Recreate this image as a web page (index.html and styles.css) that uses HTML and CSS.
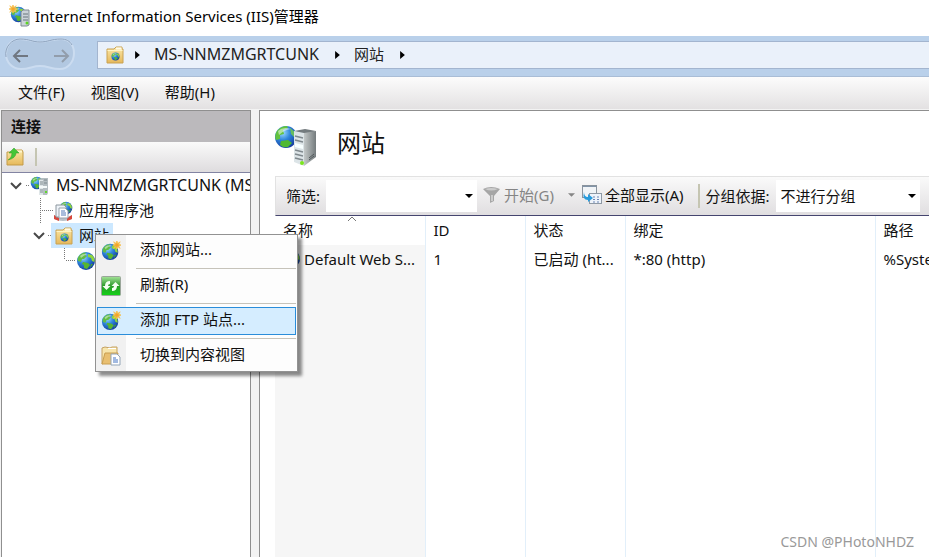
FILE: index.html
```html
<!DOCTYPE html>
<html lang="zh-CN">
<head>
  <meta charset="UTF-8">
  <meta name="viewport" content="width=device-width, initial-scale=1.0">
  <title>Internet Information Services (IIS)管理器</title>
  <link rel="stylesheet" href="styles.css">
</head>

<body>
  <!-- shared icons -->
  <svg class="sprite" aria-hidden="true">
    <defs>
      <radialGradient id="sea" cx="35%" cy="30%" r="75%">
        <stop offset="0" stop-color="#9fdcff"/>
        <stop offset="0.45" stop-color="#2f86dc"/>
        <stop offset="1" stop-color="#123a9c"/>
      </radialGradient>
      <linearGradient id="side" x1="0" x2="1">
        <stop offset="0" stop-color="#c3c8c8"/>
        <stop offset="1" stop-color="#747b7d"/>
      </linearGradient>
      <linearGradient id="gold" x1="0" y1="0" x2="0" y2="1">
        <stop offset="0" stop-color="#fbe9a9"/>
        <stop offset="1" stop-color="#e6b85a"/>
      </linearGradient>
      <linearGradient id="green" x1="0" y1="0" x2="0" y2="1">
        <stop offset="0" stop-color="#a5e399"/>
        <stop offset="0.5" stop-color="#2b9a2a"/>
        <stop offset="1" stop-color="#12d416"/>
      </linearGradient>
    </defs>
    <symbol id="globe" viewBox="0 0 20 20">
      <circle cx="10" cy="10" r="9" fill="url(#sea)"/>
      <path d="M3 5Q6 1 10 1.500L9 4L11 5L8 8L6 8L5 11L2 10Q1 7 3 5Z" fill="#62bd45"/>
      <path d="M12 3L16 4Q19 7 18.500 11L16 10L15 7L12 6Z" fill="#8fd63c"/>
      <path d="M7 11L12 12L14 14L11 18L8 17L8 14L6 13Z" fill="#57b530"/>
      <path d="M15 13L17 13L14 17Z" fill="#4aa82e"/>
      <path d="M4 5Q7 2 12 3Q8 4 5 7Z" fill="#ffffff" opacity="0.45"/>
    </symbol>
    <symbol id="server" viewBox="0 0 42 42">
      <circle cx="11" cy="12" r="11" fill="url(#sea)"/>
      <path d="M2 6Q6 1 12 1L13 3L8 5L9 9L5 10L5 14L1 15Q-1 10 2 6Z" fill="#62c33e"/>
      <path d="M6 16L13 15L17 18L13 22Q8 23 5 20Z" fill="#4fb832"/>
      <path d="M15 3L20 7L19 12L16 9Z" fill="#66bd60"/>
      <path d="M3 6Q8 1 16 4Q9 5 4 10Z" fill="#ffffff" opacity="0.5"/>
      <path d="M19 6L30 4L41 6L30 10Z" fill="#737b7e"/>
      <path d="M19 6L29 8L29 41L19 37Z" fill="#dce4e7"/>
      <path d="M29 8L41 6L41 32L29 41Z" fill="url(#side)"/>
      <path d="M20 11L28 13M20 15L28 17M20 25L28 27M20 29L28 31M20 33L28 35" stroke="#7f898e" stroke-width="1.500"/>
      <path d="M20 18L28 20L28 24L20 22Z" fill="#f7ffff"/>
      <path d="M34 33L39 29M34 35L39 31" stroke="#50575a"/>
      <circle cx="27" cy="38" r="2" fill="#7be51d"/>
    </symbol>
    <symbol id="server-small" viewBox="0 0 20 20">
      <use href="#globe" x="0" y="0" width="14" height="14"/>
      <path d="M9 4L11 2H18V17L17 19H9Z" fill="#b4bdc1"/>
      <path d="M9 4H13V19H9Z" fill="#dfe6e8"/>
      <path d="M10 6H13M10 8H13M10 14H13M10 16H13M14 4H17M14 7H17" stroke="#7c888d"/>
      <path d="M9 11H17" stroke="#f5fafa" stroke-width="2"/>
      <path d="M15 15H17V17H15Z" fill="#62d62e"/>
    </symbol>
    <symbol id="star" viewBox="0 0 10 10">
      <path d="M5 0L6 3L9 1L7 4L10 5L7 6L9 9L6 7L5 10L4 7L1 9L3 6L0 5L3 4L1 1L4 3Z" fill="#f4a62a" stroke="#f8c04c" stroke-width="1"/>
    </symbol>
    <symbol id="site-folder" viewBox="0 0 18 18">
      <path d="M1 3H8L10 1H16V3H17V17H1Z" fill="url(#gold)" stroke="#c9a252"/>
      <path d="M10 2.500H15.500" stroke="#fffbe8" stroke-width="2"/>
      <path d="M1.500 4.500H16.500" stroke="#fff3c2"/>
      <use href="#globe" x="5" y="6" width="9" height="9"/>
    </symbol>
    <symbol id="up-folder" viewBox="0 0 18 18">
      <path d="M1 4H8L10 2H16L17 4V17H1Z" fill="url(#gold)" stroke="#c39b49"/>
      <path d="M10 3.500H16" stroke="#fff6ce" stroke-width="2"/>
      <path d="M2 12Q6 10 6 5H3L8 0L13 5H10Q10 10 2 12Z" fill="#46c637" stroke="#2c9a25" stroke-width="0.500"/>
    </symbol>
    <symbol id="app-pool" viewBox="0 0 20 20">
      <use href="#globe" x="6" y="0" width="14" height="14"/>
      <path d="M1 14Q10 20 19 14V18Q10 22 1 18Z" fill="#b9c1c8"/>
      <path d="M1 14L6 17V20L1 18ZM19 14L14 17V20L19 18Z" fill="#d8473b"/>
      <path d="M3 4H11L13 6V16H3Z" fill="#eef3f8" stroke="#8b969e"/>
      <path d="M6 7H12L15 10V17H6Z" fill="#ffffff" stroke="#99a3ad"/>
      <path d="M8 10H12M8 12H13M8 14H13" stroke="#537bb8"/>
    </symbol>
    <symbol id="new-site" viewBox="0 0 22 22">
      <use href="#globe" x="0" y="2" width="20" height="20"/>
      <use href="#star" x="13" y="0" width="9" height="9"/>
    </symbol>
    <symbol id="refresh" viewBox="0 0 20 20">
      <rect x="0.500" y="0.500" width="19" height="19" rx="1" fill="url(#green)" stroke="#9aa69a"/>
      <path d="M9 5Q4 5 4 10H1.500L5.500 14L9.500 10H7Q7 8 9 8Z" fill="#f4fff2"/>
      <path d="M11 15Q16 15 16 10H18.500L14.500 6L10.500 10H13Q13 12 11 12Z" fill="#f4fff2"/>
    </symbol>
    <symbol id="content-view" viewBox="0 0 20 20">
      <path d="M1 2L4 1L9 2L11 1H16V17H3L1 18Z" fill="#f7e5ac" stroke="#c5a262"/>
      <path d="M4 7H17L15 18H1Z" fill="#e9bf70" stroke="#c99e50"/>
      <path d="M7 2.500H15" stroke="#ffffff"/>
      <path d="M10 8H16L19 11V19H10Z" fill="#ffffff" stroke="#93a5b7"/>
      <path d="M12 12H15M12 14H17M12 16H17" stroke="#4474c3"/>
    </symbol>
    <symbol id="funnel" viewBox="0 0 18 18">
      <path d="M0 3Q8 -1 17 3L11 10V15L7 17V10Z" fill="#a6a6a6"/>
      <path d="M2 3Q8 1 15 3Q8 6 2 3Z" fill="#cccccc"/>
      <path d="M9 9V15" stroke="#cccccc" stroke-width="2"/>
    </symbol>
    <symbol id="show-all" viewBox="0 0 20 20">
      <rect x="0.500" y="0.500" width="14" height="12" fill="#f1f4f7" stroke="#8a949e"/>
      <path d="M1 1.500H14" stroke="#8194a8"/>
      <rect x="7.500" y="8.500" width="12" height="10" fill="#eef3fa" stroke="#8e99a5"/>
      <path d="M11 12H13M15 12H17M11 14.500H13M15 14.500H17M11 17H13M15 17H17" stroke="#6c86b5"/>
      <path d="M2 7Q2 12 6 12V9L11 13L6 17V15Q0 15 2 7Z" fill="#279bdc"/>
    </symbol>
    <symbol id="caret-right" viewBox="0 0 6 10"><path d="M0 0L6 5L0 10Z"/></symbol>
    <symbol id="caret-down" viewBox="0 0 8 4"><path d="M0 0H8L4 4Z"/></symbol>
  </svg>

  <div class="window">
    <header class="titlebar">
      <svg class="app-icon" viewBox="0 0 22 22">
        <use href="#globe" x="1" y="1" width="17" height="17"/>
        <use href="#star" x="0" y="0" width="8" height="8"/>
        <path d="M12 7L14 5H20V20L18 21H12Z" fill="#cbd3d8" stroke="#7e8b92"/>
        <path d="M14 9H19M14 12H19M14 15H19" stroke="#68757d"/>
        <circle cx="18" cy="18" r="1.500" fill="#5bd421"/>
      </svg>
      <h1>Internet Information Services (IIS)管理器</h1>
    </header>

    <nav class="address-bar">
      <div class="history">
        <svg class="history-plate" viewBox="0 0 70 34">
          <path d="M15 2C25 2 27 5 35 5S46 2 56 2C65 2 69 9 69 16C69 25 63 32 55 32C46 32 43 29 35 29S25 32 16 32C7 32 1 25 1 17C1 9 6 2 15 2Z" fill="#b2c8e1" stroke="#cbdcf0" stroke-width="2"/>
          <path d="M1 20C-1 10 7 2 15 2C25 2 27 5 35 5S46 2 56 2C61 2 65 4 67 8" fill="none" stroke="#8ca2bd" stroke-width="1"/>
        </svg>
        <div class="history-buttons">
          <button aria-label="后退"><svg viewBox="0 0 16 14"><path d="M8 1L2 7L8 13M2 7H16" fill="none" stroke="#707781" stroke-width="2"/></svg></button>
          <button aria-label="前进"><svg viewBox="0 0 16 14"><path d="M8 1L14 7L8 13M0 7H14" fill="none" stroke="#929dab" stroke-width="2"/></svg></button>
        </div>
      </div>
      <div class="path">
        <svg class="icon-18"><use href="#site-folder"/></svg>
        <svg class="crumb-arrow"><use href="#caret-right"/></svg>
        <a href="#" class="machine">MS-NNMZMGRTCUNK</a>
        <svg class="crumb-arrow"><use href="#caret-right"/></svg>
        <a href="#">网站</a>
        <svg class="crumb-arrow"><use href="#caret-right"/></svg>
      </div>
    </nav>

    <div class="menubar">
      <button>文件(F)</button>
      <button>视图(V)</button>
      <button>帮助(H)</button>
    </div>

    <main class="panes">
      <section class="connections">
        <h2>连接</h2>
        <div class="connections-tools">
          <button aria-label="上移"><svg class="icon-18"><use href="#up-folder"/></svg></button>
          <span class="divider"></span>
        </div>
        <ul class="tree">
          <li>
            <svg class="gutter root" viewBox="0 0 28 25"><path class="chevron" d="M9 10L14 15L19 10"/><path class="dots" d="M24 12.500H28"/></svg>
            <svg class="icon-20"><use href="#server-small"/></svg>
            <span class="label machine">MS-NNMZMGRTCUNK (MS-NNMZMGRTCUNK\Administrator)</span>
          </li>
          <li>
            <svg class="gutter child" viewBox="0 0 51 25"><path class="dots" d="M38.500 0V25M40 12.500H51"/></svg>
            <svg class="icon-20"><use href="#app-pool"/></svg>
            <span class="label">应用程序池</span>
          </li>
          <li>
            <svg class="gutter folder" viewBox="0 0 49 25"><path class="chevron" d="M32 10L37 15L42 10"/><path class="dots" d="M46 12.500H49"/></svg>
            <span class="selected"><svg class="icon-18"><use href="#site-folder"/></svg><span class="label">网站</span></span>
          </li>
          <li>
            <svg class="gutter leaf" viewBox="0 0 74 25"><path class="dots" d="M62.500 0V12M64 12.500H74"/></svg>
            <svg class="icon-20"><use href="#globe"/></svg>
          </li>
        </ul>
      </section>

      <section class="feature">
        <div class="feature-title">
          <svg class="feature-icon"><use href="#server"/></svg>
          <h2>网站</h2>
        </div>

        <div class="filter-bar">
          <label for="filter">筛选:</label>
          <div class="combo filter-combo">
            <input id="filter" type="text">
            <svg class="combo-arrow"><use href="#caret-down"/></svg>
          </div>
          <button class="go" disabled>
            <svg class="icon-18"><use href="#funnel"/></svg>开始(G)
            <svg class="go-arrow"><use href="#caret-down"/></svg>
          </button>
          <button class="show-all"><svg class="icon-20"><use href="#show-all"/></svg>全部显示(A)</button>
          <span class="divider"></span>
          <label for="group">分组依据:</label>
          <div class="combo group-combo">
            <select id="group"><option>不进行分组</option></select>
            <svg class="combo-arrow"><use href="#caret-down"/></svg>
          </div>
        </div>

        <div class="site-list">
          <table class="sites">
            <colgroup>
              <col class="col-name"><col class="col-short"><col class="col-short"><col class="col-binding"><col>
            </colgroup>
            <thead>
              <tr>
                <th class="sorted">名称<svg class="sort-mark" viewBox="0 0 10 6"><path d="M1 5L5 1L9 5" fill="none" stroke="#777777"/></svg></th>
                <th>ID</th>
                <th>状态</th>
                <th>绑定</th>
                <th>路径</th>
              </tr>
            </thead>
            <tbody>
              <tr>
                <td class="name"><div class="site-name"><svg class="icon-18"><use href="#globe"/></svg>Default Web S...</div></td>
                <td>1</td>
                <td>已启动 (ht...</td>
                <td>*:80 (http)</td>
                <td>%SystemDrive%\inetpub\wwwroot</td>
              </tr>
              <tr class="rest"><td class="name"></td><td></td><td></td><td></td><td></td></tr>
            </tbody>
          </table>
        </div>
      </section>
    </main>
  </div>

  <div class="context-menu" role="menu">
    <button role="menuitem"><svg class="icon-20"><use href="#new-site"/></svg><span>添加网站...</span></button>
    <hr>
    <button role="menuitem"><svg class="icon-20"><use href="#refresh"/></svg><span>刷新(R)</span></button>
    <hr>
    <button role="menuitem" class="active"><svg class="icon-20"><use href="#new-site"/></svg><span>添加 FTP 站点...</span></button>
    <hr>
    <button role="menuitem"><svg class="icon-20"><use href="#content-view"/></svg><span>切换到内容视图</span></button>
  </div>

  <div class="watermark">CSDN @PHotoNHDZ</div>
</body>
</html>
```

FILE: styles.css
```css
* {
  box-sizing: border-box;
}

body {
  margin: 0;
  font-family: "Noto Sans", "Noto Sans CJK SC", sans-serif;
  font-size: 15px;
  line-height: 20px;
  color: #111;
  overflow: hidden;
}

button,
input,
select {
  margin: 0;
  padding: 0;
  border: none;
  background: none;
  font: inherit;
  color: inherit;
}

h1,
h2,
ul {
  margin: 0;
  padding: 0;
}

svg {
  display: block;
  flex: none;
}

.sprite {
  position: absolute;
  width: 0;
  height: 0;
}

.icon-18 {
  width: 18px;
  height: 18px;
}

.icon-20 {
  width: 20px;
  height: 20px;
}

.machine {
  font-size: 16px;
}

.window {
  display: flex;
  flex-direction: column;
  height: 100vh;
}

/* title and address */
.titlebar {
  display: flex;
  align-items: center;
  gap: 4px;
  height: 36px;
  padding: 0 9px 4px;
  background: #fff;
}

.titlebar h1 {
  font-size: 15px;
  font-weight: normal;
  color: #000;
}

.app-icon {
  width: 22px;
  height: 22px;
}

.address-bar {
  display: flex;
  gap: 22px;
  height: 41px;
  padding: 1px 0 7px 5px;
  background: #b9d0ea;
  border-bottom: 1px solid #a9bdd6;
}

.history {
  display: grid;
  width: 70px;
}

.history-plate,
.history-buttons {
  grid-area: 1 / 1;
}

.history-plate {
  width: 70px;
  height: 34px;
}

.history-buttons {
  display: flex;
  justify-content: space-between;
  align-items: center;
  padding: 3px 5px 0 7px;
}

.history-buttons svg {
  width: 16px;
  height: 14px;
}

.path {
  flex: 1;
  display: flex;
  align-items: center;
  margin-top: 4px;
  padding-left: 8px;
  background: #eaf1fa;
  border: 1px solid #a3b5cf;
  border-right: none;
}

.path a {
  padding-bottom: 2px;
  color: #222;
  text-decoration: none;
}

.crumb-arrow {
  width: 5px;
  height: 8px;
  margin: 0 14px 0 16px;
}

.icon-18 + .crumb-arrow {
  margin-left: 11px;
}

.menubar {
  display: flex;
  gap: 26px;
  height: 32px;
  padding: 0 18px 2px;
  background: linear-gradient(#fcfcfc, #e3e1e2);
}

/* panes */
.panes {
  flex: 1;
  display: flex;
  gap: 8px;
  min-height: 0;
  padding: 1px 0 0 1px;
  background: #f3f3f3;
}

.connections {
  display: flex;
  flex-direction: column;
  width: 250px;
  background: #fff;
  border: 1px solid #8f8f8f;
  border-bottom: none;
}

.connections h2 {
  padding: 5px 9px 6px;
  font-size: 15px;
  background: #bbb9bc;
}

.connections-tools {
  display: flex;
  align-items: center;
  gap: 11px;
  height: 31px;
  padding-left: 4px;
  background: linear-gradient(#fafafa, #dedcde);
  border-bottom: 1px solid #8284a2;
}

.divider {
  width: 2px;
  height: 18px;
  background: #c5c5b2;
}

.tree {
  list-style: none;
}

.tree li {
  display: flex;
  align-items: center;
  height: 25px;
  overflow: hidden;
}

.label {
  padding: 0 0 2px 6px;
  white-space: nowrap;
}

.gutter {
  height: 25px;
}

.root {
  width: 28px;
}

.child {
  width: 51px;
}

.folder {
  width: 49px;
}

.leaf {
  width: 74px;
}

.chevron {
  fill: none;
  stroke: #484848;
  stroke-width: 2;
}

.dots {
  fill: none;
  stroke: #777;
  stroke-dasharray: 1 1;
}

.selected {
  display: flex;
  align-items: center;
  height: 25px;
  padding: 0 4px;
  background: #cce8ff;
}

/* right pane */
.feature {
  flex: 1;
  display: flex;
  flex-direction: column;
  min-width: 0;
  padding-left: 15px;
  background: #fff;
  border-top: 1px solid #8f8f8f;
  border-left: 1px solid #8f8f8f;
}

.feature-title {
  display: flex;
  flex: none;
  align-items: center;
  gap: 20px;
  height: 65px;
  padding-top: 4px;
}

.feature-title h2 {
  font-size: 24px;
  font-weight: normal;
  padding-bottom: 6px;
}

.feature-icon {
  width: 42px;
  height: 42px;
}

.filter-bar {
  display: flex;
  flex: none;
  align-items: center;
  height: 40px;
  padding-left: 10px;
  white-space: nowrap;
  background: linear-gradient(#fafafa, #e0dee0);
  border-top: 1px solid #e2e2e2;
  border-left: 1px solid #e2e2e2;
  border-bottom: 1px solid #45456f;
}

.combo {
  position: relative;
  height: 32px;
  margin-left: 6px;
  background: #fff;
}

.combo input,
.combo select {
  width: 100%;
  height: 100%;
  padding: 0 20px 0 5px;
  appearance: none;
}

.combo-arrow {
  position: absolute;
  right: 4px;
  top: 14px;
  width: 8px;
  height: 4px;
}

.filter-combo {
  width: 151px;
}

.group-combo {
  width: 144px;
}

.go,
.show-all {
  display: flex;
  align-items: center;
  gap: 3px;
  padding-bottom: 2px;
}

.go {
  margin-left: 6px;
  color: #858585;
}

.go-arrow {
  width: 7px;
  height: 4px;
  margin-left: 11px;
  fill: #858585;
}

.show-all {
  margin-left: 7px;
}

.filter-bar .divider {
  height: 24px;
  margin: 0 6px 0 14px;
}

.site-list {
  flex: 1;
  min-height: 0;
  overflow: hidden;
}

.sites {
  width: 100%;
  table-layout: fixed;
  border-collapse: collapse;
}

.col-name {
  width: 150px;
}

.col-short {
  width: 100px;
}

.col-binding {
  width: 250px;
}

.sites th,
.sites td {
  height: 29px;
  padding: 0 8px 2px;
  text-align: left;
  font-weight: normal;
  white-space: nowrap;
  overflow: hidden;
  border-right: 1px solid #e2effa;
}

.sites th:last-child,
.sites td:last-child {
  border-right: none;
}

.sites .sorted {
  position: relative;
}

.sort-mark {
  position: absolute;
  top: 0;
  left: 48%;
  width: 10px;
  height: 6px;
}

.sites .name {
  background: #f6f6f6;
}

.site-name {
  display: flex;
  align-items: center;
  gap: 3px;
}

.sites .rest td {
  height: 100vh;
}

/* context menu */
.context-menu {
  position: absolute;
  left: 95px;
  top: 234px;
  width: 203px;
  padding: 2px 1px 1px;
  background: linear-gradient(to right, #f1f1f1 30px, #fdfdfd 30px);
  border: 1px solid #929292;
  box-shadow: 4px 4px 3px rgba(0, 0, 0, 0.45);
}

.context-menu button {
  display: flex;
  align-items: center;
  gap: 19px;
  width: 100%;
  height: 28px;
  padding-left: 3px;
  border: 1px solid transparent;
  text-align: left;
}

.context-menu button span {
  padding-bottom: 4px;
}

.context-menu .active {
  background: #d5edff;
  border-color: #2a8dda;
}

.context-menu hr {
  height: 1px;
  margin: 3px 0 3px 39px;
  border: none;
  background: #c6c3ba;
}

.watermark {
  position: absolute;
  right: 15px;
  bottom: 5px;
  font-size: 14px;
  color: #999;
}
```
